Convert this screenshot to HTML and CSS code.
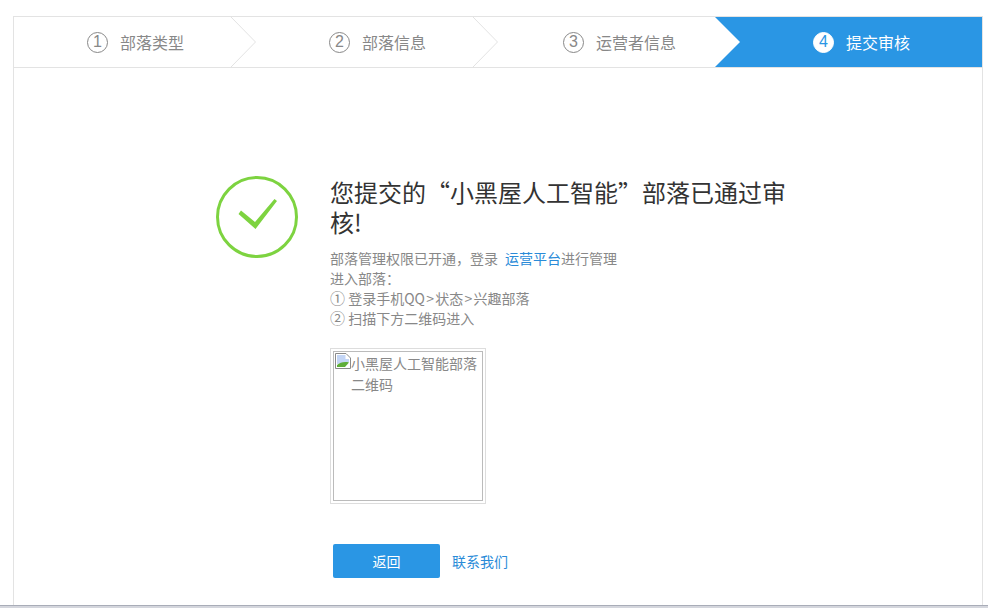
FILE: index.html
```html
<!DOCTYPE html>
<html lang="zh-CN">
<head>
<meta charset="utf-8">
<title>提交审核</title>
<link rel="stylesheet" href="styles.css">
</head>
<body>
<main class="panel">
  <ol class="steps">
    <li class="step">
      <span class="step-num">1</span><span>部落类型</span>
      <svg class="step-arrow" width="25" height="50" viewBox="0 0 25 50"><path class="arrow-line" d="M0 0L24.5 25L0 50"/></svg>
    </li>
    <li class="step">
      <span class="step-num">2</span><span>部落信息</span>
      <svg class="step-arrow" width="25" height="50" viewBox="0 0 25 50"><path class="arrow-line" d="M0 0L24.5 25L0 50"/></svg>
    </li>
    <li class="step">
      <span class="step-num">3</span><span>运营者信息</span>
      <svg class="step-arrow" width="25" height="50" viewBox="0 0 25 50"><rect class="arrow-bg" width="25" height="50"/><path class="arrow-fill" d="M0 0L25 25L0 50Z"/></svg>
    </li>
    <li class="step step-active">
      <span class="step-num">4</span><span>提交审核</span>
    </li>
  </ol>
  <section class="result">
    <svg class="result-icon" width="82" height="82" viewBox="0 0 82 82">
      <circle cx="41" cy="41" r="39.500" fill="none" stroke="#7dd340" stroke-width="3"/>
      <path d="M22.500 38L25 34.500L39 46L58.500 23L61 25L39.500 53Z" fill="#7dd340"/>
    </svg>
    <div class="result-body">
      <h1 class="result-title">您提交的“小黑屋人工智能”部落已通过审核!</h1>
      <p class="result-desc">部落管理权限已开通&#65292;登录<a class="link link-gap" href="#">运营平台</a>进行管理<br>进入部落&#65306;<br><span class="mark">①</span> 登录手机QQ<span class="sep">&gt;</span>状态<span class="sep">&gt;</span>兴趣部落<br><span class="mark">②</span> 扫描下方二维码进入</p>
      <div class="qr">
        <div class="qr-inner">
          <svg class="broken-icon" width="16" height="16" viewBox="0 0 16 16">
            <path d="M0.500 0.500H11L15.500 5V15.500H0.500Z" fill="#fff" stroke="#8a8a8a"/>
            <path d="M2 2H10.500V6H14V9L2 11Z" fill="#c3d5f5"/>
            <path d="M2 14V12C5 9.500 9 8.500 14 9.500L10 14Z" fill="#5fae3a"/>
          </svg>
          <span class="qr-alt">小黑屋人工智能部落二维码</span>
        </div>
      </div>
      <div class="actions">
        <a class="btn" href="#">返回</a>
        <a class="link" href="#">联系我们</a>
      </div>
    </div>
  </section>
</main>
<div class="bottom-bar"></div>
</body>
</html>
```

FILE: styles.css
```css
* {
  box-sizing: border-box;
}

html,
body {
  height: 608px;
  margin: 0;
  overflow: hidden;
  background: #fff;
}

body {
  display: flex;
  flex-direction: column;
  font-family: "Noto Sans CJK SC", "Liberation Sans", sans-serif;
  color: #888;
}

.panel {
  flex: 1;
  width: 970px;
  margin: 16px 0 0 13px;
  border: 1px solid #e3e3e3;
  border-bottom: 0;
}

.steps {
  display: grid;
  grid-template-columns: repeat(4, 1fr);
  height: 51px;
  margin: 0;
  padding: 0;
  list-style: none;
  border-bottom: 1px solid #e3e3e3;
}

.step {
  position: relative;
  display: flex;
  align-items: center;
  justify-content: center;
  gap: 12px;
  padding-left: 1px;
  font-size: 16px;
  line-height: 20px;
}

.step-num {
  display: flex;
  align-items: center;
  justify-content: center;
  width: 21px;
  height: 21px;
  border: 1px solid #888;
  border-radius: 50%;
  font-family: "Liberation Sans", sans-serif;
  font-size: 16px;
}

.step-arrow {
  position: absolute;
  top: 0;
  right: 0;
  display: block;
}

.arrow-line {
  fill: none;
  stroke: #e3e3e3;
}

.arrow-bg {
  fill: #2a96e4;
}

.arrow-fill {
  fill: #fff;
}

.step-active {
  background: #2a96e4;
  color: #fff;
}

.step-active .step-num {
  background: #fff;
  border-color: #fff;
  color: #2a96e4;
}

.result {
  display: flex;
  gap: 32px;
  padding: 108px 0 0 202px;
}

.result-icon {
  flex: none;
  display: block;
}

.result-body {
  width: 460px;
}

.result-title {
  margin: 1px 0 11px;
  font-size: 24px;
  font-weight: 400;
  line-height: 30px;
  color: #333;
}

.result-desc {
  margin: 0 0 20px;
  font-size: 14px;
  line-height: 20px;
}

.link {
  color: #2a8bd8;
  text-decoration: none;
}

.link-gap {
  margin-left: 7px;
}

.mark {
  font-size: 15px;
  line-height: 1;
}

.sep {
  padding: 0 1.250px;
}

.qr {
  width: 156px;
  height: 156px;
  padding: 2px;
  border: 1px solid #ddd;
}

.qr-inner {
  display: flex;
  align-items: flex-start;
  height: 150px;
  padding: 1px 0 0 1px;
  border: 1px solid #bbb;
  font-size: 14px;
  line-height: 21px;
}

.broken-icon {
  flex: none;
  display: block;
}

.qr-alt {
  width: 128px;
}

.actions {
  display: flex;
  align-items: center;
  gap: 12px;
  margin: 40px 0 0 3px;
  font-size: 14px;
}

.btn {
  width: 107px;
  height: 34px;
  border-radius: 2px;
  background: #2a96e4;
  color: #fff;
  line-height: 34px;
  text-align: center;
  text-decoration: none;
}

.bottom-bar {
  flex: none;
  height: 3px;
  border-top: 1px solid #a9adb8;
  background: #d4d6dd;
}
```
